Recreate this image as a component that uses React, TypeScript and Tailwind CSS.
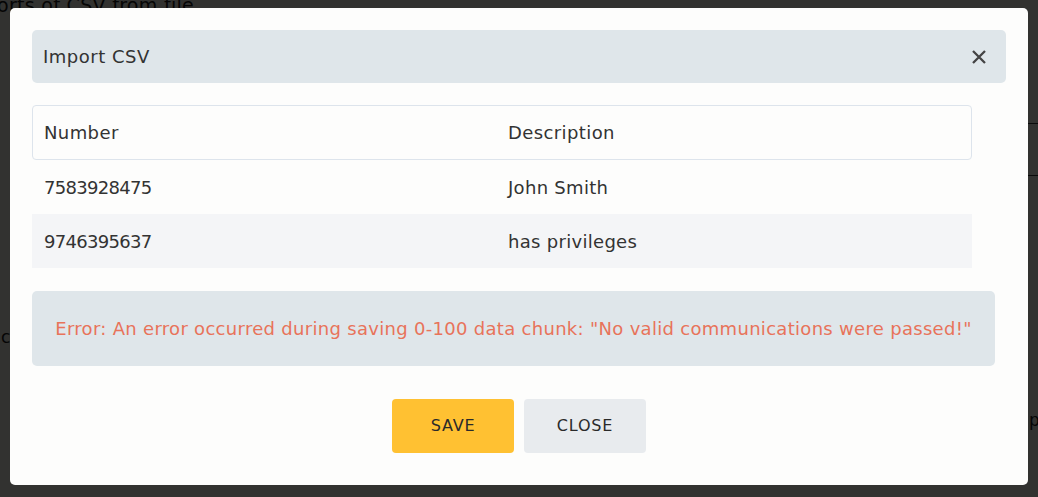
import React from "react";

const font = { fontFamily: '"DejaVu Sans", "Noto Sans", sans-serif' };

export default function App() {
  return (
    <div className="relative w-[1038px] h-[497px] overflow-hidden bg-[#323230]" style={font}>
      {/* page behind the overlay */}
      <div className="absolute left-[-3px] top-[-9px] text-[19px] tracking-[0.3px] text-[#050505] whitespace-nowrap">orts of CSV from file</div>
      <div className="absolute right-0 top-[123px] w-[40px] h-px bg-[#0a0a0a]" />
      <div className="absolute right-0 top-[175px] w-[40px] h-px bg-[#0a0a0a]" />
      <div className="absolute left-[1px] top-[325px] text-[17px] text-[#050505]">c</div>
      <div className="absolute left-[1029px] top-[408px] text-[17px] text-[#050505]">p</div>

      {/* modal */}
      <div className="absolute left-[10px] top-[8px] w-[1018px] h-[477px] rounded-[5px] bg-[#fdfdfc] px-[22px] pt-[22px] pb-[32px] flex flex-col text-[#333333]">
        <div className="h-[53px] rounded-[5px] bg-[#dfe6ea] flex items-center justify-between pl-[11px] pr-[19px]">
          <span className="text-[18px] tracking-[0.5px]">Import CSV</span>
          <svg width="16" height="16" viewBox="0 0 16 16" className="text-[#444]">
            <path d="M2 2 L14 14 M14 2 L2 14" stroke="currentColor" strokeWidth="2.3" strokeLinecap="butt" />
          </svg>
        </div>

        <div className="mt-[22px] w-[940px] text-[18px]">
          <div className="h-[55px] grid grid-cols-[464px_1fr] items-center border border-[#dde4ec] rounded-[4px]">
            <div className="pl-[11px] tracking-[0.4px]">Number</div>
            <div className="pl-[11px] tracking-[0.4px]">Description</div>
          </div>
          <div className="h-[54px] grid grid-cols-[464px_1fr] items-center">
            <div className="pl-[12px] tracking-[-0.7px]">7583928475</div>
            <div className="pl-[12px] tracking-[0.3px]">John Smith</div>
          </div>
          <div className="h-[54px] grid grid-cols-[464px_1fr] items-center bg-[#f4f5f7]">
            <div className="pl-[12px] tracking-[-0.7px]">9746395637</div>
            <div className="pl-[12px] tracking-[0.3px]">has privileges</div>
          </div>
        </div>

        <div className="mt-[23px] w-[963px] h-[75px] rounded-[5px] bg-[#dfe6ea] flex items-center justify-center text-[18px] tracking-[0.3px] text-[#e8735a] whitespace-nowrap">
          Error: An error occurred during saving 0-100 data chunk: "No valid communications were passed!"
        </div>

        <div className="mt-[33px] flex justify-center gap-[10px]">
          <button className="w-[122px] h-[54px] rounded-[4px] bg-[#ffc132] text-[16px] tracking-[0.8px] font-medium text-[#2a2a2a]">SAVE</button>
          <button className="w-[122px] h-[54px] rounded-[4px] bg-[#e8ebee] text-[16px] tracking-[0.8px] font-medium text-[#2a2a2a]">CLOSE</button>
        </div>
      </div>
    </div>
  );
}
